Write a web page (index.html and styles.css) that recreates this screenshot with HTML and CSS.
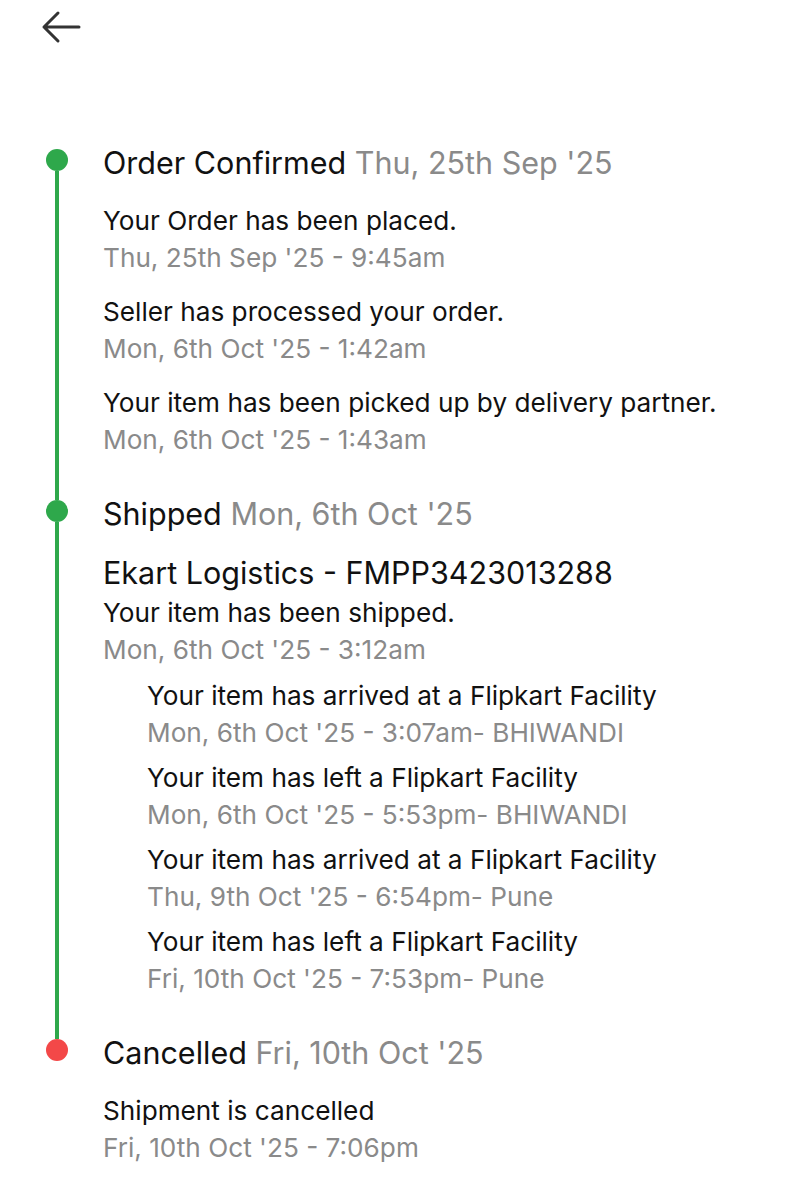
FILE: index.html
```html
<!DOCTYPE html>
<html>
<head>
<meta charset="utf-8">
<link rel="stylesheet" href="styles.css">
</head>
<body>
<div class="page">
  <div class="topbar">
    <svg class="back" width="42" height="36" viewBox="0 0 42 36"><path d="M39 18H4M18 4L4 18l14 14" fill="none" stroke="#333" stroke-width="3" stroke-linecap="round" stroke-linejoin="round"/></svg>
  </div>
  <div class="timeline">
    <div class="step">
      <div class="rail"><span class="dot green"></span><span class="line"></span></div>
      <div class="content">
        <div class="heading">Order Confirmed <span class="muted">Thu, 25th Sep '25</span></div>
        <div class="events">
          <div class="event"><div class="msg">Your Order has been placed.</div><div class="time">Thu, 25th Sep '25 - 9:45am</div></div>
          <div class="event"><div class="msg">Seller has processed your order.</div><div class="time">Mon, 6th Oct '25 - 1:42am</div></div>
          <div class="event"><div class="msg">Your item has been picked up by delivery partner.</div><div class="time">Mon, 6th Oct '25 - 1:43am</div></div>
        </div>
      </div>
    </div>
    <div class="step">
      <div class="rail"><span class="line top"></span><span class="dot green"></span><span class="line"></span></div>
      <div class="content">
        <div class="heading">Shipped <span class="muted">Mon, 6th Oct '25</span></div>
        <div class="carrier">Ekart Logistics - FMPP3423013288</div>
        <div class="event shipped"><div class="msg">Your item has been shipped.</div><div class="time">Mon, 6th Oct '25 - 3:12am</div></div>
        <div class="sub-events">
          <div class="sub"><div class="msg">Your item has arrived at a Flipkart Facility</div><div class="time">Mon, 6th Oct '25 - 3:07am- BHIWANDI</div></div>
          <div class="sub"><div class="msg">Your item has left a Flipkart Facility</div><div class="time">Mon, 6th Oct '25 - 5:53pm- BHIWANDI</div></div>
          <div class="sub"><div class="msg">Your item has arrived at a Flipkart Facility</div><div class="time">Thu, 9th Oct '25 - 6:54pm- Pune</div></div>
          <div class="sub"><div class="msg">Your item has left a Flipkart Facility</div><div class="time">Fri, 10th Oct '25 - 7:53pm- Pune</div></div>
        </div>
      </div>
    </div>
    <div class="step last">
      <div class="rail"><span class="line top"></span><span class="dot red"></span></div>
      <div class="content">
        <div class="heading">Cancelled <span class="muted">Fri, 10th Oct '25</span></div>
        <div class="events">
          <div class="event"><div class="msg">Shipment is cancelled</div><div class="time">Fri, 10th Oct '25 - 7:06pm</div></div>
        </div>
      </div>
    </div>
  </div>
</div>
</body>
</html>
```

FILE: styles.css
```css
* { box-sizing: border-box; }
html, body { margin: 0; padding: 0; background: #fff; }
body { font-family: Inter, "Noto Sans", sans-serif; color: #111; }
.page { width: 790px; }
.topbar { padding: 9px 0 0 40px; height: 145px; }
.back { display: block; }
.timeline { padding-left: 46px; }
.step { display: flex; }
.step .content { padding-bottom: 38px; }
.step.last .content { padding-bottom: 0; }
.rail { width: 57px; display: flex; flex-direction: column; align-items: flex-start; flex-shrink: 0; }
.dot { width: 22px; height: 22px; border-radius: 50%; margin-top: 4px; flex-shrink: 0; }
.line.top + .dot { margin-top: 0; }
.dot.green { background: #2ea84b; }
.dot.red { background: #f34848; }
.line { width: 4px; margin-left: 9px; background: #2ea84b; flex: 1; }
.line.top { flex: 0 0 4px; }
.content { flex: 1; }
.heading { font-size: 30.5px; line-height: 36px; color: #111; }
.muted { color: #8a8a8a; }
.events { display: flex; flex-direction: column; gap: 17px; margin-top: 21px; }
.msg { font-size: 26.2px; line-height: 37px; color: #111; white-space: nowrap; }
.time { font-size: 26.2px; line-height: 37px; color: #8a8a8a; white-space: nowrap; }
.carrier { font-size: 30.5px; line-height: 38px; margin-top: 22px; color: #111; }
.event.shipped { margin-top: 2px; }
.sub-events { display: flex; flex-direction: column; gap: 8px; margin-top: 9px; padding-left: 44px; }
```
